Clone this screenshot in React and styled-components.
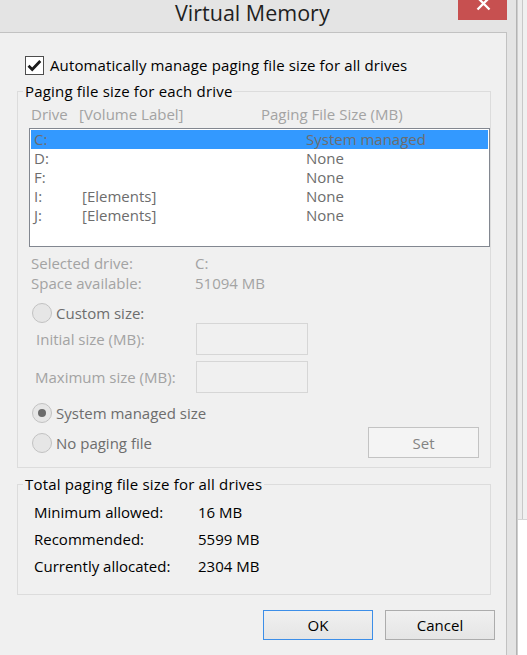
import React from "react";
import styled, { createGlobalStyle } from "styled-components";

const GlobalStyle = createGlobalStyle`
  html, body { margin: 0; padding: 0; background: #ffffff; }
  body { font-family: "Open Sans", "Noto Sans", sans-serif; }
  *, *::before, *::after { box-sizing: border-box; }
`;

const Screen = styled.div`
  width: 527px;
  height: 655px;
  display: flex;
  overflow: hidden;
  font-size: 15px;
`;

const Window = styled.div`
  flex: 0 0 517px;
  height: 655px;
  display: flex;
  flex-direction: column;
  background: #e4e4e4;
  border-right: 1px solid #b3b3b3;
`;

const TitleBar = styled.div`
  height: 32px;
  flex: 0 0 32px;
  display: flex;
  align-items: flex-start;
  padding: 0 9px 0 175px;
`;

const Title = styled.div`
  font-size: 21.5px;
  line-height: 24px;
  color: #1f1f1f;
  margin-top: 0.5px;
`;

const CloseButton = styled.div`
  margin-left: auto;
  width: 49px;
  height: 20px;
  background: #c75050;
  display: flex;
  justify-content: center;
  align-items: flex-start;
  overflow: hidden;
`;

const CloseGlyph = styled.svg`
  flex: 0 0 auto;
  margin-top: -4px;
  margin-left: 1px;
`;

const Body = styled.div`
  flex: 1;
  display: flex;
  padding-right: 9px;
`;

const Content = styled.div`
  width: 507px;
  border-top: 1px solid #c2c2c2;
  border-right: 1px solid #c2c2c2;
  background: #f0f0f0;
  display: flex;
  flex-direction: column;
  align-items: flex-start;
`;

const CheckRow = styled.label`
  margin: 22px 0 0 25px;
  height: 20px;
  display: flex;
  align-items: center;
  gap: 6px;
  color: #000;
  line-height: 20px;
  letter-spacing: 0.12px;
`;

const CheckBox = styled.span`
  width: 19px;
  height: 19px;
  border: 1px solid #4d4d4d;
  background: #ffffff;
  display: flex;
  align-items: center;
  justify-content: center;
`;

const Group = styled.fieldset`
  margin: 7px 0 0 17px;
  width: 474px;
  padding: 0 0 ${(p) => p.$pb}px 0;
  border: 1px solid #dcdcdc;
  min-width: 0;
`;

const Legend = styled.legend`
  margin-left: 5px;
  padding: 0 2px;
  font-size: 15px;
  line-height: 19px;
  color: #000;
  letter-spacing: 0.18px;
`;

const HeaderRow = styled.div`
  display: flex;
  margin: 4px 0 0 13px;
  height: 19px;
  line-height: 19px;
  color: #a3a3a3;
  white-space: nowrap;
`;

const Cell = styled.span`
  flex: 0 0 ${(p) => p.$w}px;
  white-space: nowrap;
`;

const ListBox = styled.div`
  margin: 4px 0 0 11px;
  width: 461px;
  height: 119px;
  border: 1px solid #828790;
  background: #ffffff;
  padding: 1px;
`;

const ListRow = styled.div`
  display: flex;
  height: 19px;
  line-height: 19px;
  padding-left: 3px;
  color: #6d6d6d;
  background: ${(p) => (p.$selected ? "#3399ff" : "transparent")};
`;

const InfoRow = styled.div`
  display: flex;
  margin: ${(p) => p.$mt || 0}px 0 0 13px;
  height: 20px;
  line-height: 20px;
  color: #a3a3a3;
`;

const RadioOption = styled.div`
  display: flex;
  align-items: center;
  gap: 4px;
  height: 20px;
  line-height: 20px;
  color: #6d6d6d;
  margin: ${(p) => (p.$mt !== undefined ? `${p.$mt}px 0 0 14px` : "0")};
`;

const RadioCircle = styled.span`
  width: 20px;
  height: 20px;
  border-radius: 50%;
  border: 1px solid #c2c2c2;
  background: #e6e6e6;
  display: flex;
  align-items: center;
  justify-content: center;
  &::after {
    content: "";
    display: ${(p) => (p.$checked ? "block" : "none")};
    width: 8px;
    height: 8px;
    border-radius: 50%;
    background: #6a6a6a;
  }
`;

const SizeRow = styled.div`
  display: flex;
  align-items: center;
  height: 32px;
  margin: ${(p) => p.$mt}px 0 0 ${(p) => p.$ml}px;
  color: #a3a3a3;
`;

const SizeLabel = styled.span`
  flex: 0 0 ${(p) => p.$w}px;
  white-space: nowrap;
`;

const SizeInput = styled.input`
  width: 112px;
  height: 32px;
  border: 1px solid #d6d6d6;
  background: #f0f0f0;
  margin: 0;
  padding: 0;
  outline: none;
  font: inherit;
`;

const BottomRow = styled.div`
  display: flex;
  align-items: center;
  justify-content: space-between;
  width: 447px;
  height: 31px;
  margin: 4px 0 0 14px;
`;

const SetButton = styled.button`
  width: 111px;
  height: 31px;
  border: 1px solid #c3c3c3;
  background: #f4f4f4;
  color: #838383;
  font: inherit;
  font-size: 15px;
  padding: 0;
  margin: 0;
`;

const Totals = styled.div`
  padding: 5px 0 0 16px;
`;

const TotalRow = styled.div`
  display: flex;
  height: 27px;
  line-height: 27px;
  color: #000;
`;

const ButtonRow = styled.div`
  align-self: stretch;
  display: flex;
  justify-content: flex-end;
  gap: 12px;
  padding-right: 11px;
  margin-top: 15px;
`;

const DialogButton = styled.button`
  width: 110px;
  height: 30px;
  border: 1px solid ${(p) => (p.$default ? "#3c8ee8" : "#acacac")};
  background: linear-gradient(#f0f0f0, #e5e5e5);
  color: #000;
  font: inherit;
  font-size: 15px;
  padding: 0;
  margin: 0;
`;

const BackWindow = styled.div`
  flex: 1;
  display: flex;
  flex-direction: column;
  border-left: 1px solid #cdcdcd;
  background: #ececec;
`;

const BackTop = styled.div`
  flex: 0 0 519px;
  display: flex;
`;

const BackPanel = styled.div`
  flex: 1;
  margin-left: 4px;
  border-left: 1px solid #c8c8c8;
  background: #f0f0f0;
`;

const BackWhite = styled.div`
  flex: 1;
  border-top: 1px solid #d5d5d5;
  background: #ffffff;
`;

const drives = [
  { d: "C:", label: "", size: "System managed", selected: true },
  { d: "D:", label: "", size: "None" },
  { d: "F:", label: "", size: "None" },
  { d: "I:", label: "[Elements]", size: "None" },
  { d: "J:", label: "[Elements]", size: "None" },
];

const totals = [
  ["Minimum allowed:", "16 MB"],
  ["Recommended:", "5599 MB"],
  ["Currently allocated:", "2304 MB"],
];

export default function App() {
  return (
    <>
      <GlobalStyle />
      <Screen>
        <Window>
          <TitleBar>
            <Title>Virtual Memory</Title>
            <CloseButton>
              <CloseGlyph width="15" height="15" viewBox="0 0 15 15">
                <path d="M1.5 1.5 L13.5 13.5 M13.5 1.5 L1.5 13.5" stroke="#ffffff" strokeWidth="2.3" fill="none" />
              </CloseGlyph>
            </CloseButton>
          </TitleBar>
          <Body>
            <Content>
              <CheckRow>
                <CheckBox>
                  <svg width="15" height="13" viewBox="0 0 15 13">
                    <path d="M1.5 6.8 L5.2 10.4 L13.3 2" stroke="#1a1a1a" strokeWidth="2.8" fill="none" />
                  </svg>
                </CheckBox>
                Automatically manage paging file size for all drives
              </CheckRow>

              <Group $pb={9}>
                <Legend>Paging file size for each drive</Legend>
                <HeaderRow>
                  <Cell $w={48}>Drive</Cell>
                  <Cell $w={182}>[Volume Label]</Cell>
                  <span>Paging File Size (MB)</span>
                </HeaderRow>
                <ListBox>
                  {drives.map((r) => (
                    <ListRow key={r.d} $selected={r.selected}>
                      <Cell $w={48}>{r.d}</Cell>
                      <Cell $w={224}>{r.label}</Cell>
                      <span>{r.size}</span>
                    </ListRow>
                  ))}
                </ListBox>
                <InfoRow $mt={6}>
                  <Cell $w={164}>Selected drive:</Cell>
                  <span>C:</span>
                </InfoRow>
                <InfoRow>
                  <Cell $w={164}>Space available:</Cell>
                  <span>51094 MB</span>
                </InfoRow>
                <RadioOption $mt={10}>
                  <RadioCircle />
                  Custom size:
                </RadioOption>
                <SizeRow $mt={0} $ml={18}>
                  <SizeLabel $w={160}>Initial size (MB):</SizeLabel>
                  <SizeInput disabled />
                </SizeRow>
                <SizeRow $mt={6} $ml={17}>
                  <SizeLabel $w={161}>Maximum size (MB):</SizeLabel>
                  <SizeInput disabled />
                </SizeRow>
                <RadioOption $mt={10}>
                  <RadioCircle $checked />
                  System managed size
                </RadioOption>
                <BottomRow>
                  <RadioOption>
                    <RadioCircle />
                    No paging file
                  </RadioOption>
                  <SetButton disabled>Set</SetButton>
                </BottomRow>
              </Group>

              <Group $pb={14}>
                <Legend>Total paging file size for all drives</Legend>
                <Totals>
                  {totals.map(([k, v]) => (
                    <TotalRow key={k}>
                      <Cell $w={164}>{k}</Cell>
                      <span>{v}</span>
                    </TotalRow>
                  ))}
                </Totals>
              </Group>

              <ButtonRow>
                <DialogButton $default>OK</DialogButton>
                <DialogButton>Cancel</DialogButton>
              </ButtonRow>
            </Content>
          </Body>
        </Window>
        <BackWindow>
          <BackTop>
            <BackPanel />
          </BackTop>
          <BackWhite />
        </BackWindow>
      </Screen>
    </>
  );
}
